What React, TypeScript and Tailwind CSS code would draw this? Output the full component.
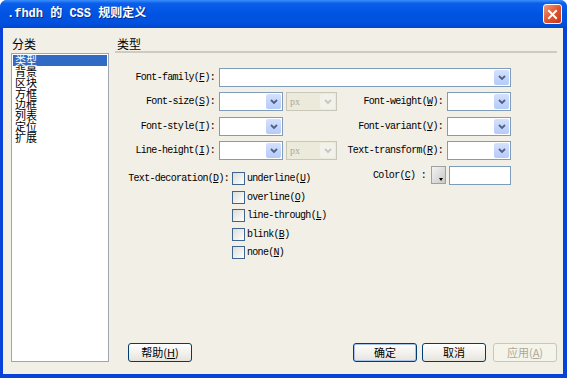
import React from "react";

const mono = "font-['Liberation_Mono',monospace] text-[10px] tracking-[-0.7px] text-black whitespace-nowrap";
const cjk = "font-['Noto_Sans_CJK_SC','Noto_Sans_CJK_JP',sans-serif]";

function Key({ k }: { k: string }) {
    return (
        <>
            (<span className="underline">{k}</span>)
        </>
    );
}

function Chevron({ disabled }: { disabled?: boolean }) {
    return (
        <svg width="8" height="6" viewBox="0 0 8 6">
            <path d="M1 1 L4 4 L7 1" fill="none" stroke={disabled ? "#c9c7ba" : "#4d6185"} strokeWidth="1.8" />
        </svg>
    );
}

function Select({ className, disabled, value }: { className: string; disabled?: boolean; value?: string }) {
    return (
        <div
            className={`flex h-[19px] items-stretch border ${disabled ? "border-[#c9c7ba] bg-[#ebeadb]" : "border-[#7f9db9] bg-white"} ${className}`}
        >
            <div className="flex flex-1 items-center pl-[3px] font-['Liberation_Serif',serif] text-[10px] text-[#aca899]">{value}</div>
            <div
                className={`m-[1px] flex w-[15px] items-center justify-center rounded-[2px] ${disabled ? "bg-[#f2f1ea]" : "bg-gradient-to-b from-[#d4e0fd] to-[#b6cbf9]"}`}
            >
                <Chevron disabled={disabled} />
            </div>
        </div>
    );
}

function Label({ className, children }: { className: string; children: React.ReactNode }) {
    return <div className={`${mono} text-right ${className}`}>{children}</div>;
}

function Checkbox({ label, k }: { label: string; k: string }) {
    return (
        <div className="flex h-[13px] items-center">
            <div className="h-[13px] w-[13px] border border-[#3d6590] bg-gradient-to-br from-[#dcdcd7] to-white" />
            <span className={`${mono} ml-[2px]`}>
                {label}
                <Key k={k} />
            </span>
        </div>
    );
}

function Btn({ children, className = "", def, disabled }: { children: React.ReactNode; className?: string; def?: boolean; disabled?: boolean }) {
    return (
        <div
            className={`${cjk} flex h-[19px] w-[64px] items-center justify-center rounded-[3px] border text-[11px] leading-none ${
                disabled
                    ? "border-[#c9c7ba] bg-[#f5f4ea] text-[#aca899]"
                    : "border-[#003c74] bg-gradient-to-b from-white to-[#e6e4dc] text-black"
            } ${def ? "shadow-[inset_0_0_0_1px_#a9c3ed]" : ""} ${className}`}
        >
            {children}
        </div>
    );
}

const categories = ["类型", "背景", "区块", "方框", "边框", "列表", "定位", "扩展"];

export default function App() {
    return (
        <div className="flex h-[378px] w-[567px] flex-col overflow-hidden rounded-t-[7px] bg-[#0842d9]">
            {/* title bar */}
            <div className="flex h-[28px] shrink-0 items-center justify-between bg-[linear-gradient(to_bottom,#3c8efc_0%,#0a5eea_12%,#0054e3_50%,#0050dc_85%,#0046cf_100%)] pl-[7px] pr-[5px]">
                <span className="font-['Liberation_Mono','Noto_Sans_CJK_SC',monospace] text-[12px] font-bold text-white [text-shadow:1px_1px_0_#0a2a8a]">
                    .fhdh 的 CSS 规则定义
                </span>
                <div className="flex h-[20px] w-[19px] items-center justify-center rounded-[3px] border border-white bg-gradient-to-br from-[#f09a7c] via-[#e0552f] to-[#c4381b]">
                    <svg width="11" height="11" viewBox="0 0 11 11">
                        <path d="M2 2 L9 9 M9 2 L2 9" stroke="white" strokeWidth="2" strokeLinecap="square" />
                    </svg>
                </div>
            </div>

            {/* client area */}
            <div className="ml-[3px] mr-[4px] mb-[4px] flex flex-1 bg-[#f1efe6] pt-[9px]">
                {/* left column */}
                <div className="ml-[8px] flex w-[98px] flex-col pb-[12px]">
                    <div className={`${cjk} h-[14px] pl-[1px] text-[12px] leading-[14px] text-black`}>分类</div>
                    <div className="mt-[2px] flex-1 border border-[#9ea7b1] bg-white p-[1px]">
                        {categories.map((c, i) => (
                            <div
                                key={c}
                                className={`${cjk} h-[11px] pl-[2px] text-[11px] leading-[11px] ${i === 0 ? "bg-[#316ac5] text-white" : "text-black"}`}
                            >
                                {c}
                            </div>
                        ))}
                    </div>
                </div>

                {/* right column */}
                <div className="ml-[6px] mr-[6px] flex flex-1 flex-col pb-[12px]">
                    <div className="h-[16px] border-b-2 border-[#cdcbc2]">
                        <div className={`${cjk} pl-[2px] text-[12px] leading-[14px] text-black`}>类型</div>
                    </div>

                    <div className="mt-[15px] flex w-[396px] flex-col">
                        <div className="flex h-[19px] items-center">
                            <Label className="w-[100px]">
                                Font-family<Key k="F" />:
                            </Label>
                            <Select className="ml-[4px] w-[292px]" />
                        </div>

                        <div className="mt-[5px] flex h-[19px] items-center">
                            <Label className="w-[100px]">
                                Font-size<Key k="S" />:
                            </Label>
                            <Select className="ml-[4px] w-[64px]" />
                            <Select className="ml-[3px] w-[51px]" disabled value="px" />
                            <Label className="w-[106px]">
                                Font-weight<Key k="W" />:
                            </Label>
                            <Select className="ml-[4px] w-[64px]" />
                        </div>

                        <div className="mt-[6px] flex h-[19px] items-center">
                            <Label className="w-[100px]">
                                Font-style<Key k="T" />:
                            </Label>
                            <Select className="ml-[4px] w-[64px]" />
                            <div className="ml-[3px] w-[51px]" />
                            <Label className="w-[106px]">
                                Font-variant<Key k="V" />:
                            </Label>
                            <Select className="ml-[4px] w-[64px]" />
                        </div>

                        <div className="mt-[5px] flex h-[19px] items-center">
                            <Label className="w-[100px]">
                                Line-height<Key k="I" />:
                            </Label>
                            <Select className="ml-[4px] w-[64px]" />
                            <Select className="ml-[3px] w-[51px]" disabled value="px" />
                            <Label className="w-[106px]">
                                Text-transform<Key k="R" />:
                            </Label>
                            <Select className="ml-[4px] w-[64px]" />
                        </div>

                        <div className="mt-[5px] flex items-start">
                            <div className="flex flex-1 items-start pt-[7px]">
                                <Label className="w-[114px] leading-[13px]">
                                    Text-decoration<Key k="D" />:
                                </Label>
                                <div className="ml-[3px] flex flex-col gap-y-[5.6px]">
                                    <Checkbox label="underline" k="U" />
                                    <Checkbox label="overline" k="O" />
                                    <Checkbox label="line-through" k="L" />
                                    <Checkbox label="blink" k="B" />
                                    <Checkbox label="none" k="N" />
                                </div>
                            </div>
                            <div className="flex h-[20px] items-center">
                                <span className={mono}>
                                    Color<Key k="C" /> :
                                </span>
                                <div className="ml-[5px] flex h-[18px] w-[15px] items-end justify-end border border-[#a0a0a0] bg-gradient-to-br from-[#f4f4f4] to-[#c8c8c8] p-[2px]">
                                    <svg width="4" height="3" viewBox="0 0 4 3">
                                        <path d="M0 0 H4 L2 3 Z" fill="#000" />
                                    </svg>
                                </div>
                                <div className="ml-[3px] h-[19px] w-[62px] border border-[#7f9db9] bg-white" />
                            </div>
                        </div>
                    </div>

                    <div className="flex-1" />

                    <div className="flex items-center">
                        <Btn className="ml-[13px]">
                            帮助<Key k="H" />
                        </Btn>
                        <div className="flex-1" />
                        <Btn def>确定</Btn>
                        <Btn className="ml-[5px]">取消</Btn>
                        <Btn className="ml-[7px]" disabled>
                            应用<Key k="A" />
                        </Btn>
                    </div>
                </div>
            </div>
        </div>
    );
}
